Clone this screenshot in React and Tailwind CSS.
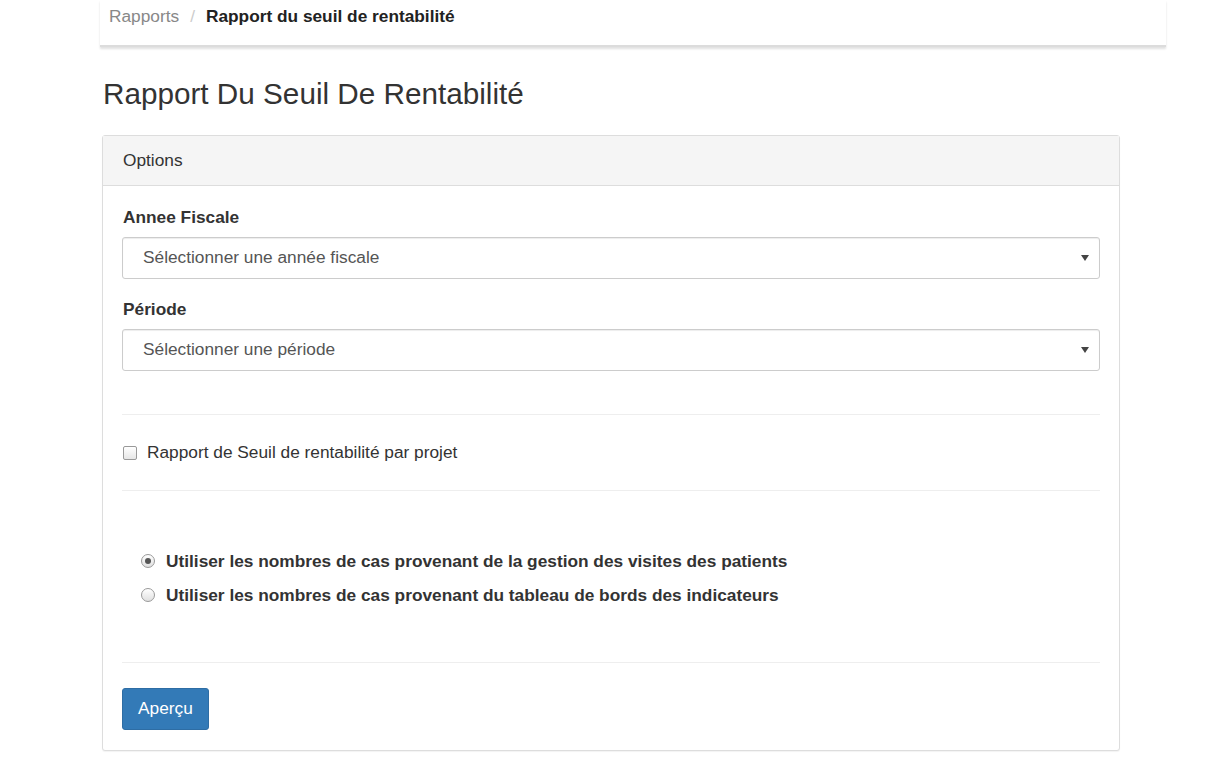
export default function App() {
  return (
    <div
      className="min-h-screen bg-white text-[#333]"
      style={{ fontFamily: '"Liberation Sans", Arial, sans-serif' }}
    >
      <div className="ml-[100px] w-[1066px]">
        <nav className="flex h-[47px] items-start border-b-[2px] border-[#dcdcdc] pt-[4px] pl-[9px] text-[17.3px] shadow-[0_2px_2px_rgba(0,0,0,0.12)]">
          <span className="text-[#888]">Rapports</span>
          <span className="px-[11px] text-[#ccc]">/</span>
          <span className="font-bold text-[#222]">Rapport du seuil de rentabilité</span>
        </nav>
      </div>

      <div className="ml-[102px] w-[1018px]">
        <h1 className="mt-[29px] ml-px text-[29.7px] leading-[36px] text-[#333]">
          Rapport Du Seuil De Rentabilité
        </h1>

        <section className="mt-[23px] rounded-[3px] border border-[#ddd] bg-white shadow-[0_1px_1px_rgba(0,0,0,0.05)]">
          <div className="flex h-[50px] items-center border-b border-[#ddd] bg-[#f5f5f5] px-[20px] text-[17.3px] text-[#333]">
            Options
          </div>

          <div className="px-[19px] pt-[21px] pb-[20px]">
            <label className="block pl-px text-[17.3px] leading-[20px] font-bold">Annee Fiscale</label>
            <SelectBox text="Sélectionner une année fiscale" />

            <label className="mt-[20px] block pl-px text-[17.3px] leading-[20px] font-bold">Période</label>
            <SelectBox text="Sélectionner une période" />

            <div className="mt-[43px] border-t border-[#eee]" />

            <label className="flex h-[75px] items-center gap-[10px] pl-px text-[17.3px] text-[#333]">
              <span className="h-[14px] w-[14px] rounded-[2px] border border-[#999] bg-gradient-to-b from-white to-[#e6e6e6]" />
              Rapport de Seuil de rentabilité par projet
            </label>

            <div className="border-t border-[#eee]" />

            <div className="flex flex-col gap-[14px] pt-[60px] pb-[57px] pl-[19px]">
              <Radio checked text="Utiliser les nombres de cas provenant de la gestion des visites des patients" />
              <Radio text="Utiliser les nombres de cas provenant du tableau de bords des indicateurs" />
            </div>

            <div className="border-t border-[#eee]" />

            <button className="mt-[25px] h-[42px] rounded-[3px] border border-[#2e6da4] bg-[#337ab7] px-[15px] text-[17.3px] text-white">
              Aperçu
            </button>
          </div>
        </section>
      </div>
    </div>
  );
}

function SelectBox({ text }) {
  return (
    <div className="mt-[10px] flex h-[42px] items-center justify-between rounded-[3px] border border-[#ccc] bg-white pr-[10px] pl-[20px] text-[17.3px] text-[#555] shadow-[inset_0_1px_1px_rgba(0,0,0,0.075)]">
      <span>{text}</span>
      <svg width="8" height="6" viewBox="0 0 8 6">
        <path d="M0 0h8L4 6z" fill="#444" />
      </svg>
    </div>
  );
}

function Radio({ checked, text }) {
  return (
    <div className="flex items-center gap-[11px] text-[17.3px] leading-[20px] font-bold text-[#333]">
      <span className="flex h-[14px] w-[14px] items-center justify-center rounded-full border border-[#999] bg-gradient-to-b from-white to-[#e0e0e0]">
        {checked ? <span className="h-[6px] w-[6px] rounded-full bg-[#555]" /> : null}
      </span>
      {text}
    </div>
  );
}
